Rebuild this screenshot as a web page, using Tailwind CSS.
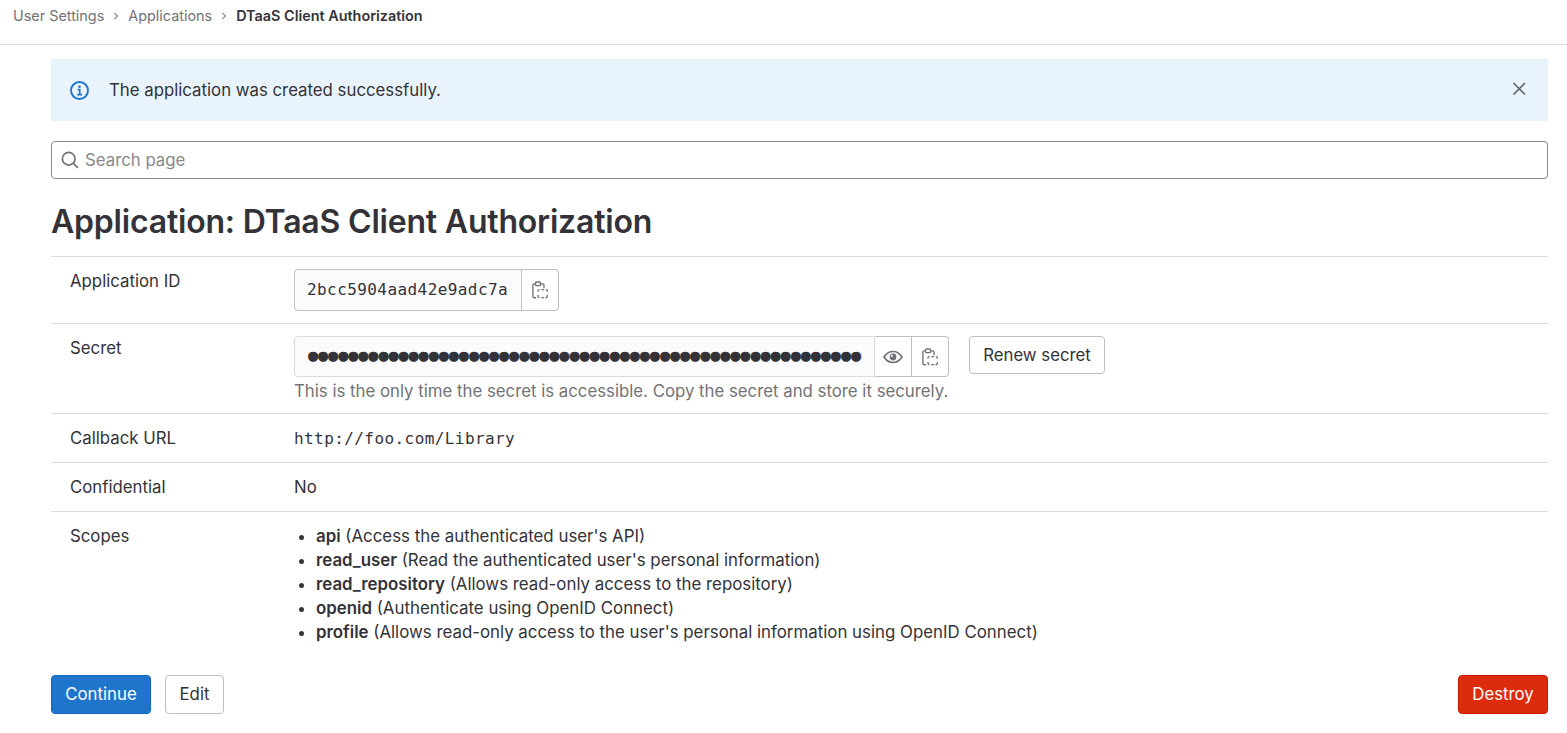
<!DOCTYPE html>
<html>
<head>
<meta charset="utf-8">
<script src="https://cdn.jsdelivr.net/npm/@tailwindcss/browser@4"></script>
</head>
<body class="bg-white text-[#333238] font-['Inter','Noto_Sans',sans-serif] text-[16.8px] overflow-hidden">
<nav class="h-[45px] border-b border-[#dcdcde] pl-[13px] flex items-start pt-[7px] text-[14.4px] leading-[18px]">
  <span class="text-[#737278]">User Settings</span>
  <svg class="mx-[6px] mt-[3px] w-[12px] h-[12px] text-[#89888d]" viewBox="0 0 12 12" fill="none" stroke="currentColor" stroke-width="1.1"><path d="M4.5 3 7.5 6 4.5 9"/></svg>
  <span class="text-[#737278]">Applications</span>
  <svg class="mx-[6px] mt-[3px] w-[12px] h-[12px] text-[#89888d]" viewBox="0 0 12 12" fill="none" stroke="currentColor" stroke-width="1.1"><path d="M4.5 3 7.5 6 4.5 9"/></svg>
  <span class="font-semibold">DTaaS Client Authorization</span>
</nav>
<main class="ml-[51px] w-[1497px]">
  <div class="mt-[14px] h-[62px] bg-[#e9f3fc] flex items-center pl-[19px] pr-[21px]">
    <svg class="w-[19px] h-[19px] text-[#1f75cb]" viewBox="0 0 19 19" fill="none" stroke="currentColor"><circle cx="9.5" cy="9.5" r="8.5" stroke-width="1.900"/><circle cx="9.5" cy="5.700" r="1.3" fill="currentColor" stroke="none"/><path d="M7.600 8.700h2.100v4.400M7.200 13.600h4.800" stroke-width="1.700"/></svg>
    <span class="ml-[20px] flex-1 pt-[2px]">The application was created successfully.</span>
    <svg class="w-[16px] h-[16px] text-[#626168] mb-[3px]" viewBox="0 0 16 16" fill="none" stroke="currentColor" stroke-width="1.700"><path d="M2.500 2 14 13.500M14 2 2.500 13.500"/></svg>
  </div>
  <div class="mt-[20px] h-[38px] border border-[#89888d] rounded-[4px] flex items-center pl-[9px]">
    <svg class="w-[18px] h-[18px] text-[#737278]" viewBox="0 0 17 17" fill="none" stroke="currentColor" stroke-width="1.600"><circle cx="7.300" cy="7.300" r="6"/><path d="M11.700 11.700 16 16"/></svg>
    <span class="ml-[6px] pt-[1px] text-[#89888d]">Search page</span>
  </div>
  <h1 class="mt-[23px] mb-[14px] h-[40px] text-[32px] leading-[40px] font-semibold tracking-[-0.2px]">Application: DTaaS Client Authorization</h1>
  <div class="border-t border-[#dcdcde] h-[67px] flex pl-[19px]">
    <div class="w-[224px] pt-[13px] leading-[22px]">Application ID</div>
    <div class="pt-[12px] flex">
      <div class="h-[42px] w-[228px] bg-[#fbfafd] border border-[#bfbfc3] rounded-l-[4px] flex items-center pl-[12px] font-['DejaVu_Sans_Mono',monospace] text-[16px] tracking-[0.42px]">2bcc5904aad42e9adc7a</div>
      <div class="h-[42px] w-[37px] border border-l-0 border-[#bfbfc3] rounded-r-[4px] flex items-center justify-center text-[#737278]">
        <svg class="w-[16px] h-[20px]" viewBox="0 0 18 20" fill="none" stroke="currentColor" stroke-width="1.500"><path d="M4.500 18.700H2.500a1.500 1.500 0 0 1-1.500-1.500V4.700a1.500 1.500 0 0 1 1.500-1.500H4M9.500 3.200h2.500a1.500 1.500 0 0 1 1.500 1.500V8"/><rect x="4" y="1" width="5.500" height="4" rx="1"/><path d="M10.500 9.500h3M15.500 9.500H16a1.200 1.200 0 0 1 1.200 1.200v1.300M17.200 15.500v1.800a1.200 1.200 0 0 1-1.200 1.200h-1M10.500 18.500h3M8.500 18.500H8a1.200 1.200 0 0 1-1.200-1.200v-1.800M6.800 12v-1.300A1.200 1.200 0 0 1 8 9.500h.5"/></svg>
      </div>
    </div>
  </div>
  <div class="border-t border-[#dcdcde] h-[90px] flex pl-[19px]">
    <div class="w-[224px] pt-[13px] leading-[22px]">Secret</div>
    <div class="pt-[12px]">
      <div class="flex">
        <div class="h-[41px] w-[581px] bg-[#fbfafd] border border-[#dcdcde] rounded-l-[4px] flex items-center pb-[1px] pl-[13px] font-['DejaVu_Sans_Mono',monospace] text-[17px] tracking-[-0.18px] whitespace-nowrap">●●●●●●●●●●●●●●●●●●●●●●●●●●●●●●●●●●●●●●●●●●●●●●●●●●●●●●●</div>
        <div class="h-[41px] w-[37px] border border-l-0 border-[#bfbfc3] flex items-center justify-center text-[#737278]">
          <svg class="w-[20px] h-[16px]" viewBox="0 0 20 16" fill="none" stroke="currentColor" stroke-width="1.600"><path d="M1 8c2.300-3.700 5.300-5.500 9-5.500S16.700 4.300 19 8c-2.300 3.700-5.300 5.500-9 5.500S3.300 11.700 1 8Z"/><circle cx="10" cy="8" r="3.400" fill="currentColor" stroke="none"/><circle cx="8.800" cy="6.800" r="1.100" fill="#fff" stroke="none"/></svg>
        </div>
        <div class="h-[41px] w-[37px] border border-l-0 border-[#bfbfc3] rounded-r-[4px] flex items-center justify-center text-[#737278]">
          <svg class="w-[16px] h-[20px]" viewBox="0 0 18 20" fill="none" stroke="currentColor" stroke-width="1.500"><path d="M4.500 18.700H2.500a1.500 1.500 0 0 1-1.500-1.500V4.700a1.500 1.500 0 0 1 1.500-1.500H4M9.500 3.200h2.500a1.500 1.500 0 0 1 1.500 1.500V8"/><rect x="4" y="1" width="5.500" height="4" rx="1"/><path d="M10.500 9.500h3M15.500 9.500H16a1.200 1.200 0 0 1 1.200 1.200v1.300M17.200 15.500v1.800a1.200 1.200 0 0 1-1.200 1.200h-1M10.500 18.500h3M8.500 18.500H8a1.200 1.200 0 0 1-1.200-1.200v-1.800M6.800 12v-1.300A1.200 1.200 0 0 1 8 9.500h.5"/></svg>
        </div>
        <div class="ml-[20px] h-[38px] w-[136px] border border-[#bfbfc3] rounded-[4px] flex items-center justify-center pt-[1px]">Renew secret</div>
      </div>
      <div class="mt-[3px] leading-[22px] text-[#737278]">This is the only time the secret is accessible. Copy the secret and store it securely.</div>
    </div>
  </div>
  <div class="border-t border-[#dcdcde] h-[49px] flex pl-[19px]">
    <div class="w-[224px] pt-[13px] leading-[22px]">Callback URL</div>
    <div class="pt-[14px] leading-[22px] font-['DejaVu_Sans_Mono',monospace] text-[16px] tracking-[0.42px]">http://foo.com/Library</div>
  </div>
  <div class="border-t border-[#dcdcde] h-[49px] flex pl-[19px]">
    <div class="w-[224px] pt-[13px] leading-[22px]">Confidential</div>
    <div class="pt-[13px] leading-[22px]">No</div>
  </div>
  <div class="border-t border-[#dcdcde] flex pl-[19px] h-[164px]">
    <div class="w-[224px] pt-[13px] leading-[22px]">Scopes</div>
    <ul class="pt-[12px] pl-[22px] list-disc leading-[24px] text-[16.85px]">
      <li><b class="font-semibold">api</b> (Access the authenticated user's API)</li>
      <li><b class="font-semibold">read_user</b> (Read the authenticated user's personal information)</li>
      <li><b class="font-semibold">read_repository</b> (Allows read-only access to the repository)</li>
      <li><b class="font-semibold">openid</b> (Authenticate using OpenID Connect)</li>
      <li><b class="font-semibold">profile</b> (Allows read-only access to the user's personal information using OpenID Connect)</li>
    </ul>
  </div>
  <div class="flex">
    <div class="h-[39px] w-[100px] bg-[#1f75cb] border border-[#1068bf] text-white rounded-[4px] flex items-center justify-center">Continue</div>
    <div class="ml-[14px] h-[39px] w-[59px] border border-[#bfbfc3] rounded-[4px] flex items-center justify-center">Edit</div>
    <div class="ml-auto h-[39px] w-[90px] bg-[#dd2b0e] border border-[#c91c00] text-white rounded-[4px] flex items-center justify-center">Destroy</div>
  </div>
</main>
</body>
</html>
